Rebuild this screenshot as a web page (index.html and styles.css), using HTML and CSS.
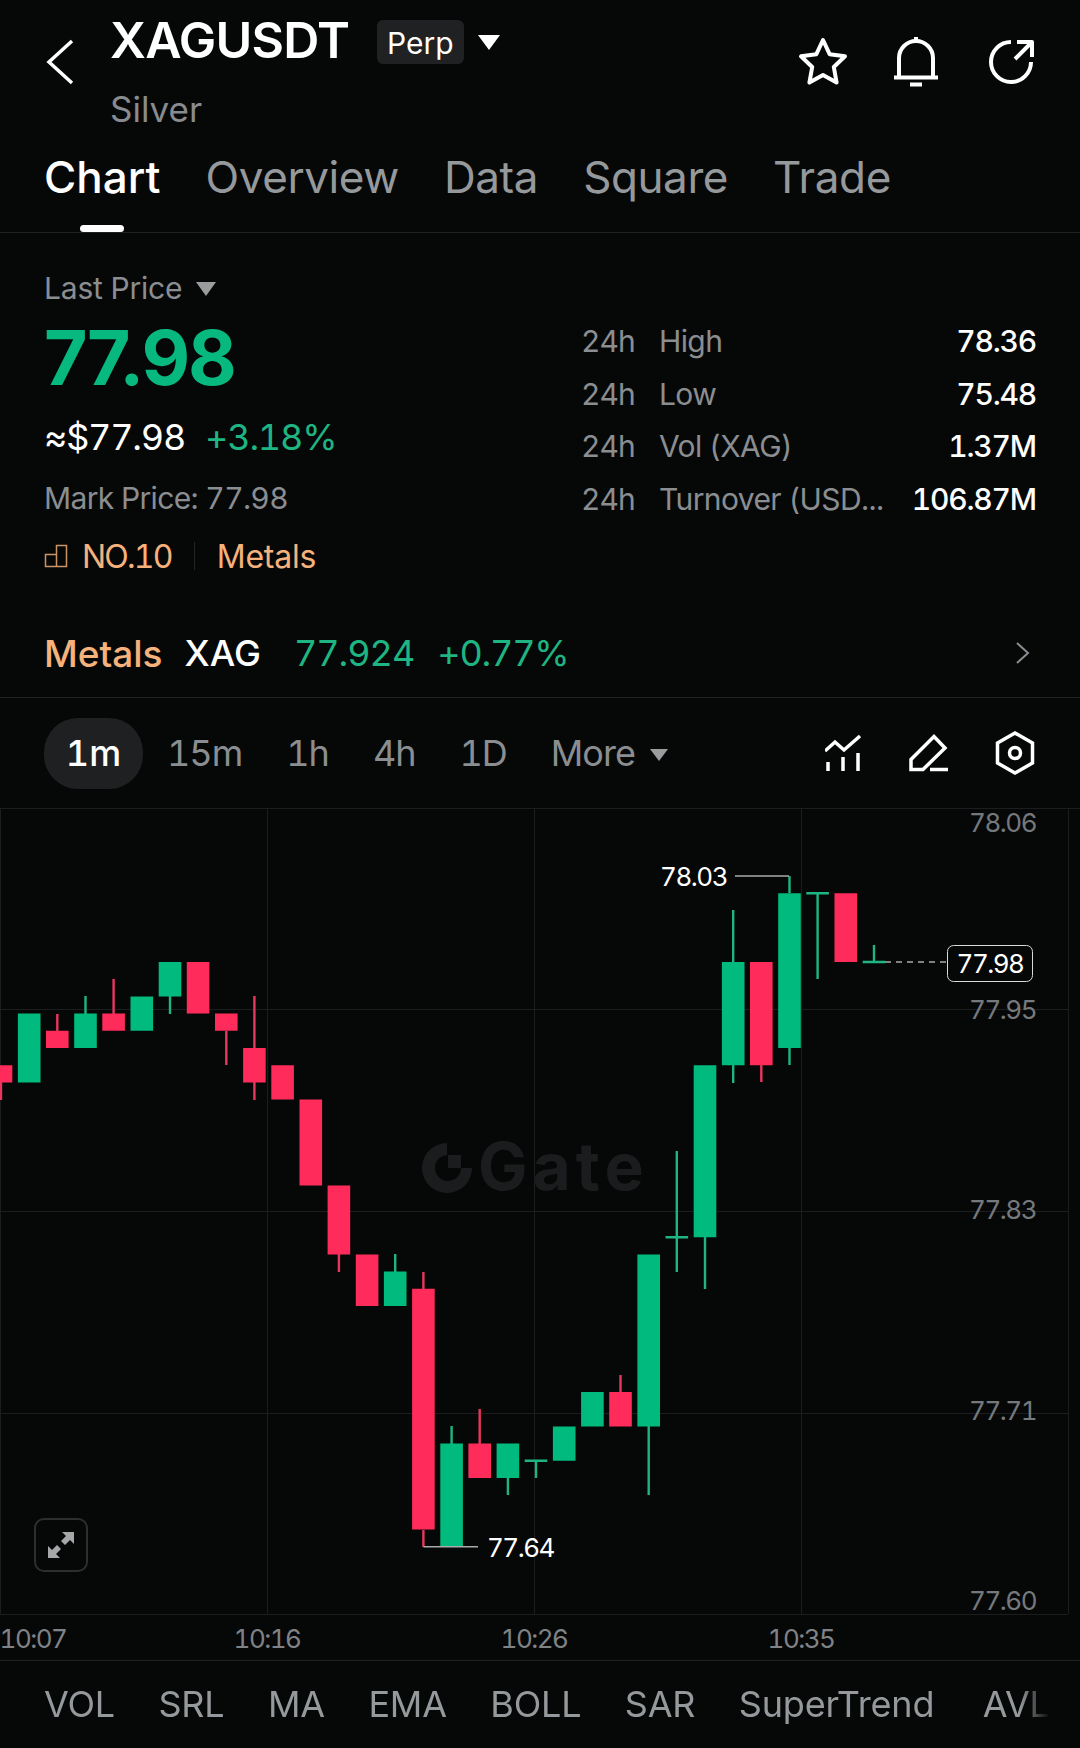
FILE: index.html
```html
<!DOCTYPE html>
<html lang="en">

<head>
  <meta charset="UTF-8">
  <meta name="viewport" content="width=device-width, initial-scale=1.0">
  <title>XAGUSDT</title>
  <link rel="stylesheet" href="styles.css">
</head>

<body>
  <header class="top">
    <svg class="back" width="30" height="46" viewBox="0 0 30 46"><path d="M26 2 3 23l23 21" /></svg>
    <div class="symbol">
      <div class="symbol-row">
        <h1>XAGUSDT</h1>
        <span class="perp">Perp</span>
        <i class="caret caret-white"></i>
      </div>
      <div class="silver">Silver</div>
    </div>
    <div class="top-icons">
      <svg width="50" height="50" viewBox="0 0 50 50"><path d="M25 3l6.6 14.2L47 19.3 35.8 30l2.8 15.6L25 38 11.400 45.600 14.200 30 3 19.300l15.400-2.100z" /></svg>
      <svg width="46" height="52" viewBox="0 0 46 52"><path d="M6 41V22a17 17 0 0 1 34 0v19" /><path d="M1 41.500h44M17 48.500h12M23 1v4" /></svg>
      <svg class="share" width="48" height="48" viewBox="0 0 48 48"><path d="M22 4a20 20 0 1 0 20 20" /><path d="M26 21 42 5M28 4h15v15" /></svg>
    </div>
  </header>

  <nav class="tabs">
    <a class="tab on">Chart</a>
    <a class="tab">Overview</a>
    <a class="tab">Data</a>
    <a class="tab">Square</a>
    <a class="tab">Trade</a>
  </nav>

  <section class="info">
    <div class="info-left">
      <div class="last">Last Price <i class="caret caret-grey"></i></div>
      <div class="price">77.98</div>
      <div class="approx"><span>≈$77.98</span><span class="green">+3.18%</span></div>
      <div class="mark">Mark Price: 77.98</div>
      <div class="rank">
        <svg width="24" height="24" viewBox="0 0 24 24"><path d="M1.500 10.500h11v12h-11zM12.500 1.500h10v21h-10z" /></svg>
        <span class="rank-no">NO.10</span>
        <i class="rank-sep"></i>
        <span>Metals</span>
      </div>
    </div>
    <div class="stats">
      <div class="stat"><span class="h24">24h</span><span class="name">High</span><b>78.36</b></div>
      <div class="stat"><span class="h24">24h</span><span class="name">Low</span><b>75.48</b></div>
      <div class="stat"><span class="h24">24h</span><span class="name">Vol (XAG)</span><b>1.37M</b></div>
      <div class="stat"><span class="h24">24h</span><span class="name">Turnover (USD...</span><b>106.87M</b></div>
    </div>
  </section>

  <section class="sector">
    <span class="sector-name">Metals</span>
    <span class="sector-coin">XAG</span>
    <span class="green sector-price">77.924</span>
    <span class="green sector-change">+0.77%</span>
    <svg class="sector-arrow" width="16" height="24" viewBox="0 0 16 24"><path d="M2 2l11 10L2 22" /></svg>
  </section>

  <section class="periods">
    <span class="period on">1m</span>
    <span class="period">15m</span>
    <span class="period">1h</span>
    <span class="period">4h</span>
    <span class="period">1D</span>
    <span class="period more">More <i class="caret caret-grey"></i></span>
    <div class="tools">
      <svg width="38" height="38" viewBox="826 734 38 38"><path d="M826 751l10-9 9 8 16-14M829 762v9M844 757v14M859 753v18" /></svg>
      <svg width="40" height="38" viewBox="911 733 40 38"><path d="M913 768.500v-10l23-23 11 11.500-22 21.500zM932 768.500h18" /></svg>
      <svg width="40" height="44" viewBox="996 731 40 44"><path d="M1016 733l17.500 10v20L1016 773l-17.500-10V743z" /><circle cx="1016" cy="753" r="5.500" /></svg>
    </div>
  </section>

  <section class="chart">
    <svg class="plot" width="1080" height="853" viewBox="0 808 1080 853">
      <path class="grid" d="M0 808.500H1080M0 1009.500H1068M0 1211.500H1068M0 1413.500H1068M0 1614.500H1068M0.500 808V1614M267.500 808V1614M534.500 808V1614M801.500 808V1614M1068.500 808V1614" />

      <g class="logo">
        <path d="M472 1168a25 25 0 1 1-25-25v12a13 13 0 1 0 14 13z" />
        <rect x="448" y="1155" width="13" height="13" />
        <text x="478" y="1190">Gate</text>
      </g>

      <g class="down">
        <path class="wick" d="M1 1082V1100M57.300 1014V1031M113.600 979V1014M226.300 1031V1065M254.400 996V1100M338.900 1254V1272M423.400 1272V1289M423.400 1530V1547M479.700 1409V1444M620.500 1375V1392M761.300 1065V1082" />
        <path class="body" d="M1 1065.200V1082.400M57.300 1030.800V1048M113.600 1013.600V1030.800M198.100 962V1013.600M226.300 1013.600V1030.800M254.400 1048V1082.400M282.600 1065.200V1099.600M310.800 1099.600V1185.600M338.900 1185.600V1254.400M367.100 1254.400V1306M423.400 1288.800V1529.600M479.700 1443.600V1478M620.500 1392V1426.400M761.300 962V1065.200M845.800 893.200V962" />
      </g>
      <g class="up">
        <path class="wick" d="M85.500 996V1014M170 996V1014M395.200 1254V1272M451.600 1426V1444M507.900 1478V1495M536 1461V1478M648.700 1426V1495M676.800 1151V1272M705 1237V1289M733.200 910V962M733.200 1065V1083M789.500 876V893M789.500 1048V1065M817.600 893V979M874 945V962M524.700 1460.800H547.300M665.500 1237.200H688.100M806.300 893.200H828.900M862.700 962H885.300" />
        <path class="body" d="M29.200 1013.600V1082.400M85.500 1013.600V1048M141.800 996.400V1030.800M170 962V996.400M395.200 1271.600V1306M451.600 1443.600V1546.800M507.900 1443.600V1478M564.200 1426.400V1460.800M592.400 1392V1426.400M648.700 1254.400V1426.400M705 1065.200V1237.200M733.200 962V1065.200M789.500 893.200V1048" />
      </g>

      <path class="marker" d="M735 876H789M423.500 1546.800H478" />
      <path class="last-line" d="M885 962H947" />
      <rect class="last-box" x="947.500" y="945.500" width="85" height="36" rx="6" />
      <text class="last-val" x="990" y="973">77.98</text>
      <text class="mark-val" x="727" y="886">78.03</text>
      <text class="mark-val low" x="487" y="1557">77.64</text>

      <text class="axis" x="1036" y="832">78.06</text>
      <text class="axis" x="1036" y="1019">77.95</text>
      <text class="axis" x="1036" y="1219">77.83</text>
      <text class="axis" x="1036" y="1420">77.71</text>
      <text class="axis" x="1036" y="1610">77.60</text>

      <text class="time" x="33" y="1648">10:07</text>
      <text class="time" x="267" y="1648">10:16</text>
      <text class="time" x="534" y="1648">10:26</text>
      <text class="time" x="801" y="1648">10:35</text>
    </svg>
    <button class="expand">
      <svg width="28" height="28" viewBox="0 0 28 28"><path d="M15 1h12v12l-4-4-5 5-4-4 5-5zM13 27H1V15l4 4 5-5 4 4-5 5z" /></svg>
    </button>
  </section>

  <nav class="indicators">
    <span>VOL</span>
    <span>SRL</span>
    <span>MA</span>
    <span>EMA</span>
    <span>BOLL</span>
    <span>SAR</span>
    <span>SuperTrend</span>
    <span class="avl">AVL</span>
  </nav>
</body>

</html>
```

FILE: styles.css
```css
* {
  box-sizing: border-box;
}
body {
  margin: 0;
  width: 1080px;
  height: 1748px;
  overflow: hidden;
  background: #060808;
  color: #fff;
  font-family: Inter, "Liberation Sans", sans-serif;
  font-variant-numeric: tabular-nums;
}
.green {
  color: #1fb582;
}
.caret {
  display: inline-block;
  width: 0;
  height: 0;
  border-left: 10px solid transparent;
  border-right: 10px solid transparent;
  border-top: 14px solid #9a9c9e;
}
.caret-white {
  border-left-width: 11px;
  border-right-width: 11px;
  border-top: 15px solid #fff;
}

/* header */
.top {
  height: 134px;
  display: flex;
  align-items: flex-start;
  padding: 0 43px 0 46px;
}
.back {
  margin-top: 39px;
  fill: none;
  stroke: #fff;
  stroke-width: 3.5;
}
.symbol {
  margin-left: 34px;
}
.symbol-row {
  display: flex;
  align-items: center;
  height: 80px;
}
.symbol-row h1 {
  margin: 0;
  font-size: 50px;
  font-weight: 600;
  letter-spacing: -0.8px;
}
.perp {
  margin: 3px 0 0 28px;
  padding: 0 10px;
  height: 44px;
  line-height: 46px;
  border-radius: 6px;
  background: #1f2122;
  font-size: 30px;
}
.caret-white {
  margin: 5px 0 0 14px;
}
.silver {
  margin-top: 8px;
  font-size: 35px;
  color: #888b8f;
}
.top-icons {
  margin-left: auto;
  display: flex;
  align-items: center;
  gap: 45px;
  margin-top: 36px;
}
.top-icons svg {
  fill: none;
  stroke: #fff;
  stroke-width: 4;
  stroke-linejoin: round;
}
.top-icons .share {
  margin-left: 5px;
}

/* tabs */
.tabs {
  height: 99px;
  display: flex;
  gap: 45px;
  padding-left: 44px;
  border-bottom: 1px solid #1f2122;
}
.tab {
  position: relative;
  font-size: 44px;
  line-height: 86px;
  letter-spacing: -0.4px;
  color: #96999c;
}
.tab.on {
  color: #fff;
  font-weight: 500;
  letter-spacing: 0;
}
.tab.on::after {
  content: "";
  position: absolute;
  left: 36px;
  bottom: 0;
  width: 44px;
  height: 7px;
  border-radius: 4px;
  background: #fff;
}

/* price block */
.info {
  height: 380px;
  display: flex;
  justify-content: space-between;
  padding: 0 44px;
}
.last {
  margin-top: 31px;
  font-size: 30px;
  line-height: 48px;
  letter-spacing: -0.2px;
  color: #8b8e91;
}
.last .caret {
  margin-left: 6px;
  vertical-align: 3px;
}
.price {
  margin-top: 4px;
  font-size: 75px;
  line-height: 84px;
  font-weight: 700;
  letter-spacing: -2px;
  font-variant-numeric: proportional-nums;
  color: #07b97e;
}
.approx {
  margin-top: 11px;
  display: flex;
  gap: 20px;
  font-size: 36px;
  line-height: 52px;
  letter-spacing: -1.2px;
}
.mark {
  margin-top: 9px;
  font-size: 30px;
  line-height: 52px;
  letter-spacing: -0.65px;
  color: #8b8e91;
}
.rank {
  display: flex;
  align-items: center;
  margin-top: 5px;
  height: 54px;
  font-size: 32px;
  letter-spacing: -0.2px;
  color: #f5b27c;
}
.rank svg {
  fill: none;
  stroke: #c99567;
  stroke-width: 1.5;
  margin-right: 14px;
}
.rank-no {
  letter-spacing: -1.8px;
}
.rank-sep {
  width: 1px;
  height: 28px;
  margin: 0 22px;
  background: #222425;
}
.stats {
  width: 455px;
  padding-top: 82px;
}
.stat {
  display: flex;
  height: 52.500px;
  line-height: 52px;
  font-size: 30px;
  color: #8b8e91;
}
.h24 {
  width: 78px;
  letter-spacing: -1px;
}
.name {
  letter-spacing: -0.6px;
}
.stat b {
  margin-left: auto;
  font-weight: 500;
  letter-spacing: -1.2px;
  color: #fff;
}

/* sector row */
.sector {
  height: 85px;
  display: flex;
  align-items: center;
  padding: 0 49px 4px 44px;
  font-size: 36px;
  border-bottom: 1px solid #1f2122;
}
.sector-name {
  color: #f5b27c;
  font-size: 37px;
  font-weight: 500;
}
.sector-coin {
  margin-left: 22px;
  font-weight: 500;
}
.sector-price {
  margin: 0 23px 0 33px;
  letter-spacing: -1px;
}
.sector-change {
  letter-spacing: -1.2px;
}
.sector-arrow {
  margin-left: auto;
  fill: none;
  stroke: #8b8e91;
  stroke-width: 2;
}

/* period row */
.periods {
  height: 110px;
  display: flex;
  align-items: center;
  padding: 0 45px 0 44px;
  font-size: 36px;
  letter-spacing: -1px;
  color: #8b8e91;
}
.period {
  margin-right: 44px;
}
.period.on {
  width: 99px;
  height: 71px;
  margin-right: 24px;
  line-height: 71px;
  text-align: center;
  letter-spacing: 0;
  border-radius: 34px;
  background: #1e2021;
  color: #fff;
  font-weight: 500;
}
.more .caret {
  margin-left: 6px;
  vertical-align: 5px;
  border-left-width: 9px;
  border-right-width: 9px;
  border-top-width: 12px;
}
.tools {
  margin-left: auto;
  display: flex;
  align-items: center;
  gap: 46px;
}
.tools svg {
  fill: none;
  stroke: #fff;
  stroke-width: 3.500;
}

/* chart */
.chart {
  position: relative;
  height: 853px;
  border-bottom: 1px solid #1f2122;
}
.plot {
  display: block;
}
.grid {
  fill: none;
  stroke: #1b1d1e;
  stroke-width: 1;
}
.logo {
  fill: #1a1c1d;
}
.logo text {
  font-size: 66px;
  font-weight: 700;
  letter-spacing: 5px;
}
.body,
.wick {
  fill: none;
}
.body {
  stroke-width: 22.600;
}
.wick {
  stroke-width: 2.400;
}
.up .body {
  stroke: #00bb7d;
}
.up .wick {
  stroke: #1fb582;
}
.down .body {
  stroke: #ff2c5b;
}
.down .wick {
  stroke: #e8365f;
}
.marker {
  fill: none;
  stroke: #a8aaac;
  stroke-width: 1.500;
}
.last-line {
  fill: none;
  stroke: #a8aaac;
  stroke-width: 1.500;
  stroke-dasharray: 6 5;
}
.last-box {
  fill: #060808;
  stroke: #d8d9da;
  stroke-width: 1;
}
.last-val,
.mark-val,
.axis,
.time {
  font-size: 26px;
  letter-spacing: -1.5px;
}
.last-val {
  fill: #fff;
  text-anchor: middle;
}
.mark-val {
  fill: #fff;
  text-anchor: end;
}
.mark-val.low {
  text-anchor: start;
}
.axis {
  fill: #76797c;
  text-anchor: end;
}
.time {
  fill: #808386;
  text-anchor: middle;
}
.expand {
  position: absolute;
  left: 34px;
  top: 710px;
  width: 54px;
  height: 54px;
  padding: 0;
  display: flex;
  align-items: center;
  justify-content: center;
  border: 2px solid #2c2e2f;
  border-radius: 10px;
  background: transparent;
}
.expand svg {
  fill: #a5a7a9;
}

/* indicator tabs */
.indicators {
  height: 86px;
  display: flex;
  align-items: center;
  gap: 43.500px;
  padding-left: 44px;
  font-size: 36px;
  letter-spacing: -0.2px;
  color: #96999c;
  white-space: nowrap;
  overflow: hidden;
  -webkit-mask-image: linear-gradient(to right, #000 1020px, transparent 1050px);
  mask-image: linear-gradient(to right, #000 1020px, transparent 1050px);
}
.avl {
  margin-left: 5px;
}
```
